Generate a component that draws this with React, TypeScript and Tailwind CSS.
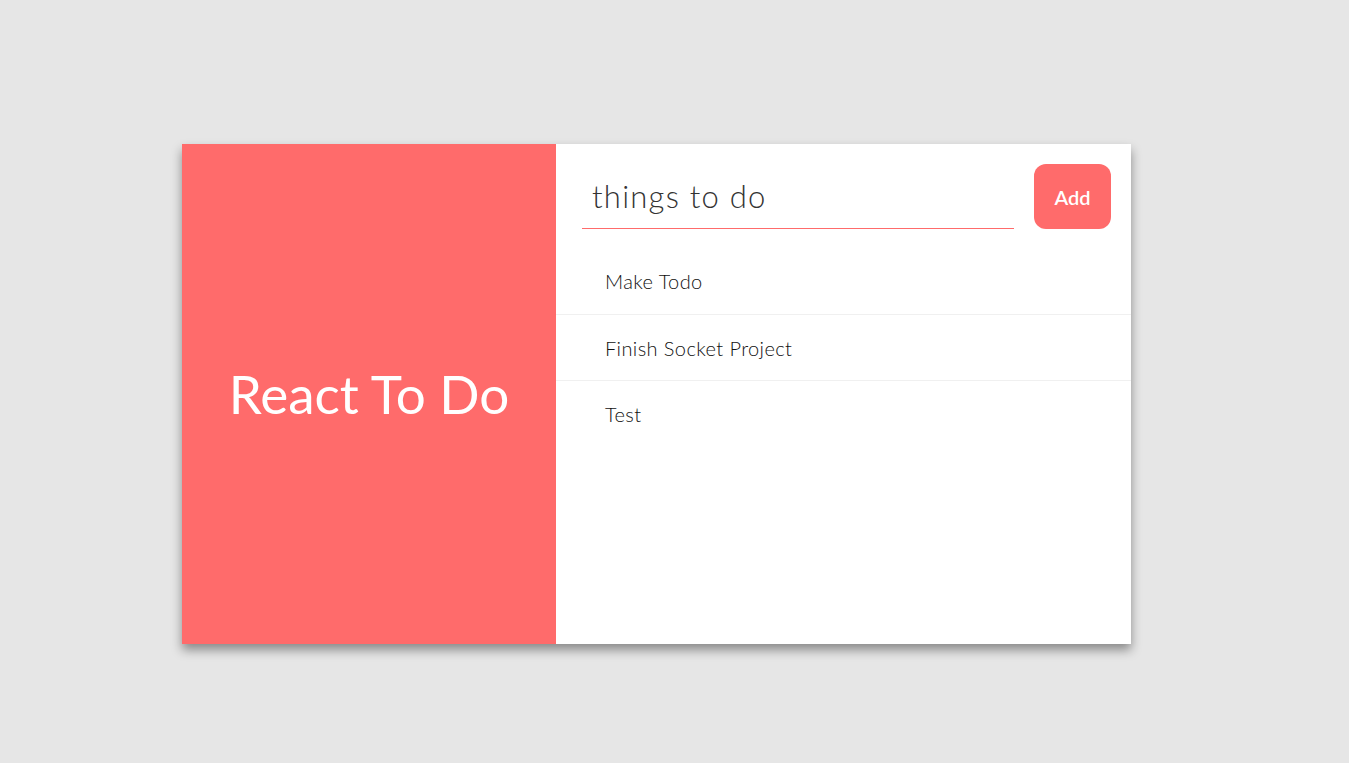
export default function App() {
  const todos = ["Make Todo", "Finish Socket Project", "Test"];

  return (
    <div
      className="min-h-screen w-full bg-[#e6e6e6] pt-[144px] pl-[182px]"
      style={{ fontFamily: "Lato, 'Noto Sans', sans-serif" }}
    >
      <div className="flex w-[949px] h-[500px] bg-white shadow-[0_6px_10px_rgba(0,0,0,0.4)]">
        {/* title panel */}
        <div className="w-[374px] shrink-0 bg-[#ff6b6b] flex items-center justify-center">
          <h1 className="text-white text-[53px] font-normal">React To Do</h1>
        </div>

        {/* list panel */}
        <div className="flex-1 flex flex-col">
          <div className="flex items-stretch pt-5 pr-5 pl-[26px] gap-5">
            <input
              className="flex-1 h-[65px] border-b border-[#ff6b6b] outline-none pl-[10px] text-[31px] tracking-[0.04em] font-light text-[#333] placeholder:text-[#333]"
              placeholder="things to do"
            />
            <button className="w-[77px] h-[65px] rounded-xl bg-[#ff6b6b] text-white text-[20px] font-semibold">
              Add
            </button>
          </div>
          <ul className="mt-[19px]">
            {todos.map((t, i) => (
              <li
                key={t}
                className={
                  "h-[66px] flex items-center pl-[49px] text-[20px] tracking-[0.02em] text-[#111] font-light " +
                  (i > 0 ? "border-t border-[#f0f0f0]" : "")
                }
              >
                {t}
              </li>
            ))}
          </ul>
        </div>
      </div>
    </div>
  );
}
